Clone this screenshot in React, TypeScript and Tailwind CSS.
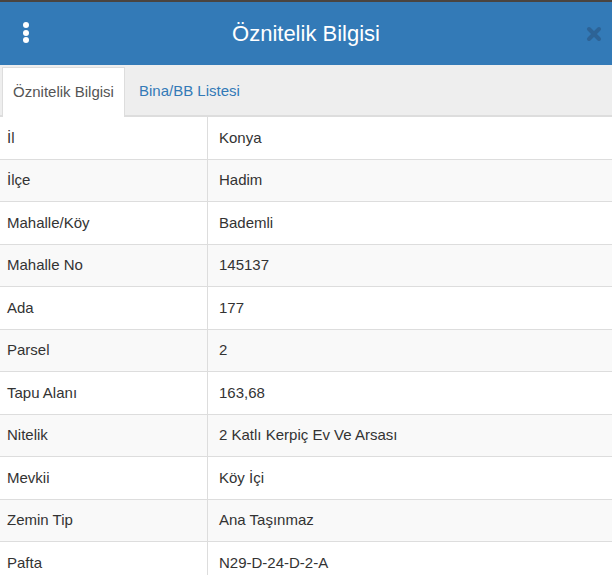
const rows: [string, string][] = [
  ["İl", "Konya"],
  ["İlçe", "Hadim"],
  ["Mahalle/Köy", "Bademli"],
  ["Mahalle No", "145137"],
  ["Ada", "177"],
  ["Parsel", "2"],
  ["Tapu Alanı", "163,68"],
  ["Nitelik", "2 Katlı Kerpiç Ev Ve Arsası"],
  ["Mevkii", "Köy İçi"],
  ["Zemin Tip", "Ana Taşınmaz"],
  ["Pafta", "N29-D-24-D-2-A"],
];

export default function App() {
  return (
    <div className="h-[575px] w-[612px] overflow-hidden bg-white font-['Liberation_Sans',Arial,sans-serif] text-[#333]">
      <div className="h-[2px] bg-[#4a4440]" />
      <div className="relative flex h-[63px] items-center justify-center bg-[#337ab7]">
        <div className="absolute left-[23px] top-[20px] flex flex-col gap-[1.5px]">
          <span className="h-[6px] w-[6px] rounded-full bg-white" />
          <span className="h-[6px] w-[6px] rounded-full bg-white" />
          <span className="h-[6px] w-[6px] rounded-full bg-white" />
        </div>
        <h1 className="text-[22px] leading-none text-white">Öznitelik Bilgisi</h1>
        <svg className="absolute right-[10px] top-[24px]" width="16" height="16" viewBox="0 0 16 16">
          <path d="M3 3 L13 13 M13 3 L3 13" stroke="#2d6396" strokeWidth="4" strokeLinecap="round" />
        </svg>
      </div>
      <div className="flex h-[52px] items-end border-b-2 border-[#ddd] bg-[#eee] pl-[2px]">
        <div className="-mb-[2px] flex h-[50px] w-[123px] items-center justify-center border border-b-0 border-[#ddd] bg-white text-[15px] text-[#555]">
          Öznitelik Bilgisi
        </div>
        <div className="flex h-[48px] items-center pl-[14px] text-[15px] text-[#337ab7]">
          Bina/BB Listesi
        </div>
      </div>
      <div className="flex flex-col">
        {rows.map(([label, value], i) => (
          <div
            key={label}
            className={`flex h-[42.5px] border-b border-[#ddd] text-[15px] ${i % 2 === 1 ? "bg-[#f9f9f9]" : "bg-white"}`}
          >
            <div className="flex w-[208px] items-center border-r border-[#ddd] pl-[7px]">{label}</div>
            <div className="flex flex-1 items-center pl-[11px]">{value}</div>
          </div>
        ))}
      </div>
    </div>
  );
}
